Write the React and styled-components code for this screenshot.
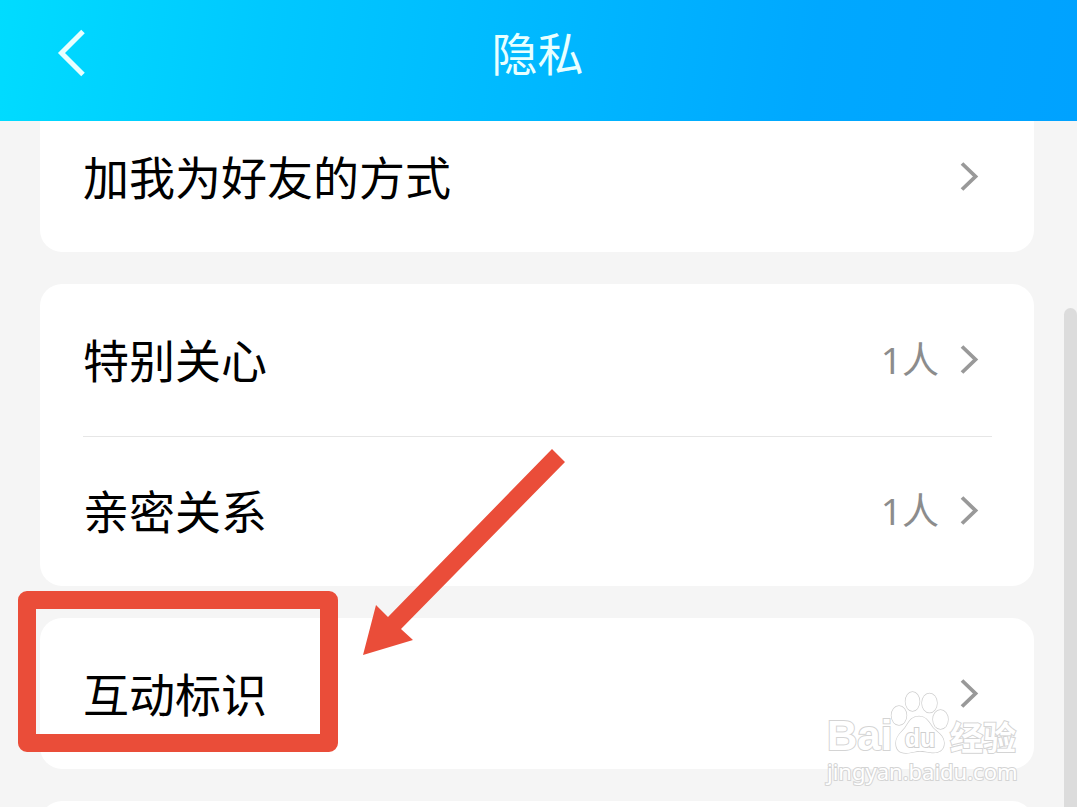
import React from 'react'
import styled, { createGlobalStyle } from 'styled-components';

const groups = [
    [{ name: '加我为好友的方式' }],
    [
        { name: '特别关心', count: '1人' },
        { name: '亲密关系', count: '1人' },
    ],
    [{ name: '互动标识', marked: true }],
]

const Chevron = () => (
    <ChevronIcon viewBox="0 0 20 30" aria-hidden="true">
        <path d="M3 1.5 L16.5 14.5 L3 27.5" fill="none" stroke="#999" strokeWidth="3.8" />
    </ChevronIcon>
)

const SettingRow = ({ item }) => (
    <Row>
        <RowButton type="button">
            <Name>{item.name}</Name>
            {item.count && <Count>{item.count}</Count>}
            <Chevron />
        </RowButton>
        {item.marked && (
            <>
                <MarkBox />
                <MarkArrow viewBox="0 0 203 206" aria-hidden="true">
                    <path d="M0 206 L13 156 L25 168 L189 0 L202 13 L38 180 L50 191 Z" fill="#ea4d39" />
                </MarkArrow>
            </>
        )}
    </Row>
)

const Logo = () => (
    <Watermark>
        <LogoLine>
            <Brand>Bai</Brand>
            <Paw viewBox="0 0 60 64" aria-hidden="true">
                <g fill="#fff" stroke="#cfcfcf" strokeWidth="1.4">
                    <ellipse cx="9" cy="24.5" rx="7.5" ry="9.5" />
                    <ellipse cx="22.5" cy="10.5" rx="7" ry="9.5" />
                    <ellipse cx="39.5" cy="12" rx="7.5" ry="9.5" />
                    <ellipse cx="50.5" cy="28.5" rx="7.5" ry="9.5" />
                    <path d="M29 25.5 C37 25.5 39 32 43 37 C48 42 54 45 54 52 C54 59 49 62 42 61.5 C36 61 34 60 30 60 C25 60 22 62 16 62 C9 62 6 58 6 52 C6 45 11 42 15 37 C19 31 21 25.5 29 25.5 Z" />
                </g>
                <PawText x="30" y="56" textAnchor="middle">du</PawText>
            </Paw>
            <BrandCn>经验</BrandCn>
        </LogoLine>
        <Site>jingyan.baidu.com</Site>
    </Watermark>
)

const App = () => {
    return (
        <Page>
            <GlobalStyle />
            <Header>
                <Back type="button" aria-label="返回">
                    <svg width="28" height="48" viewBox="0 0 28 48" aria-hidden="true">
                        <path d="M26 2.5 L4.5 24 L26 45.5" fill="none" stroke="#e8ffff" strokeWidth="5" />
                    </svg>
                </Back>
                <Title>隐私</Title>
            </Header>
            <Content>
                {groups.map((group, id) => (
                    <Card key={id}>
                        {group.map((item) => (
                            <SettingRow key={item.name} item={item} />
                        ))}
                    </Card>
                ))}
                <NextCard />
            </Content>
            <ScrollThumb />
            <Logo />
        </Page>
    )
}

const GlobalStyle = createGlobalStyle`
    * {
        box-sizing: border-box;
    }

    body {
        margin: 0;
        background: #f5f5f5;
        font-family: "Noto Sans", "Noto Sans CJK SC", sans-serif;
    }
`

const Page = styled.div`
    position: relative;
    display: flex;
    flex-direction: column;
    height: 100vh;
    overflow: hidden;
`

const Header = styled.header`
    display: grid;
    grid-template-columns: 118px 1fr 120px;
    align-items: center;
    flex: none;
    height: 121px;
    padding-bottom: 15px;
    background: linear-gradient(98deg, #00dcff 0%, #00c8ff 25%, #00b8ff 50%, #00a8ff 75%, #00a2ff 100%);
    z-index: 1;
`

const Back = styled.button`
    display: flex;
    padding: 0 0 0 57px;
    border: 0;
    background: none;
    cursor: pointer;
`

const Title = styled.h1`
    margin: 0;
    color: #e8ffff;
    font-size: 46px;
    font-weight: 400;
    line-height: 64px;
    text-align: center;
`

const Content = styled.main`
    display: flex;
    flex-direction: column;
    gap: 32px;
    /* first card is scrolled a little under the header */
    margin-top: -20px;
    padding: 0 43px 0 40px;
`

const Card = styled.ul`
    flex: none;
    margin: 0;
    padding: 0;
    border-radius: 22px;
    background: #fff;
    list-style: none;
`

const NextCard = styled(Card).attrs({ as: 'div' })`
    height: 151px;
`

const Row = styled.li`
    position: relative;

    & + &::before {
        content: '';
        position: absolute;
        top: 1px;
        left: 43px;
        right: 42px;
        height: 1px;
        background: #e6e6e6;
    }
`

const RowButton = styled.button`
    display: flex;
    align-items: center;
    width: 100%;
    height: 151px;
    padding: 0 55px 0 43px;
    border: 0;
    background: none;
    font-family: inherit;
    text-align: left;
    cursor: pointer;
`

const Name = styled.span`
    flex: 1;
    color: #000;
    font-size: 46px;
    line-height: 64px;
`

const Count = styled.span`
    margin-right: 20px;
    color: #8c8c8c;
    font-size: 37px;
    line-height: 52px;
`

const ChevronIcon = styled.svg`
    flex: none;
    width: 20px;
    height: 30px;
`

const MarkBox = styled.span`
    position: absolute;
    top: -27px;
    left: -22px;
    width: 320px;
    height: 161px;
    border: 18px solid #ea4d39;
    border-radius: 9px;
    pointer-events: none;
`

const MarkArrow = styled.svg`
    position: absolute;
    top: -169px;
    left: 323px;
    width: 203px;
    height: 206px;
    pointer-events: none;
`

const ScrollThumb = styled.div`
    position: absolute;
    top: 308px;
    right: 0;
    bottom: 0;
    width: 13px;
    border-radius: 7px 7px 0 0;
    background: #dcdcdc;
`

const Watermark = styled.div`
    position: absolute;
    right: 56px;
    bottom: 20px;
    width: 194px;
    color: #fff;
    white-space: nowrap;
    paint-order: stroke fill;
    -webkit-text-stroke: 2px #d4d4d4;
`

const LogoLine = styled.div`
    display: flex;
    align-items: flex-end;
    height: 64px;
`

const Brand = styled.span`
    width: 63px;
    font-family: "Liberation Sans", sans-serif;
    font-size: 42px;
    font-weight: 700;
    line-height: 38px;
`

const Paw = styled.svg`
    flex: none;
    width: 60px;
    height: 64px;
`

const PawText = styled.text`
    fill: #fff;
    stroke: #cfcfcf;
    stroke-width: 2px;
    font-family: "Liberation Sans", sans-serif;
    font-size: 25px;
    font-weight: 700;
`

const BrandCn = styled.span`
    font-family: "Noto Sans CJK SC", sans-serif;
    font-size: 33px;
    font-weight: 700;
    line-height: 38px;
`

const Site = styled.div`
    font-family: "Noto Sans", sans-serif;
    font-size: 22px;
    line-height: 32px;
`

export default App
